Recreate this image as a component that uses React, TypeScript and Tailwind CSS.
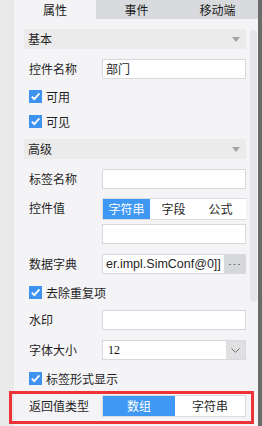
import React from 'react';

const font = { fontFamily: '"Noto Sans CJK SC", "Liberation Sans", sans-serif' };

const Check: React.FC<{ label: string; className?: string }> = ({ label, className }) => (
  <div className={`flex items-center h-[13px] pl-[5px] ${className ?? ''}`}>
    <span className="w-[13px] h-[13px] bg-[#3d93ef] flex items-center justify-center shrink-0">
      <svg width="11" height="11" viewBox="0 0 11 11">
        <path d="M1.8 5.6 L4.3 8.2 L9.4 2.4" stroke="#fff" strokeWidth="1.8" fill="none" />
      </svg>
    </span>
    <span className="ml-[4px] text-[12px] leading-none text-[#1f1f1f]">{label}</span>
  </div>
);

const Header: React.FC<{ title: string; className?: string }> = ({ title, className }) => (
  <div className={`h-[20px] bg-[#ebebeb] flex items-center justify-between pl-[4px] pr-[6px] ${className ?? ''}`}>
    <span className="text-[12px] leading-none text-[#1f1f1f]">{title}</span>
    <svg width="8" height="5" viewBox="0 0 8 5">
      <path d="M0 0 H8 L4 5 Z" fill="#a3a3a3" />
    </svg>
  </div>
);

const Row: React.FC<{ label: string; className?: string; children: React.ReactNode }> = ({
  label,
  className,
  children,
}) => (
  <div className={`flex items-center ${className ?? ''}`}>
    <span className="w-[78px] pl-[5px] text-[12px] leading-none text-[#1f1f1f] shrink-0">{label}</span>
    <div className="flex-1">{children}</div>
  </div>
);

const Input: React.FC<{ value?: string }> = ({ value }) => (
  <div className="h-[20px] bg-white border border-[#d9d9db] flex items-center px-[3px] text-[12px] leading-none text-[#1f1f1f] overflow-hidden whitespace-nowrap">
    {value}
  </div>
);

export default function App() {
  return (
    <div className="relative w-[262px] h-[426px] flex bg-[#e9e9e9] overflow-hidden" style={font}>
      <div className="w-[14px] shrink-0 bg-[#e9e9e9]" />
      <div className="w-[244px] shrink-0 flex flex-col bg-[#f4f4f6]">
        <div className="h-[19px] flex text-[12px] leading-none text-[#1a1a1a]">
          <div className="w-[82px] flex items-center justify-center bg-[#f4f4f6]">属性</div>
          <div className="w-[81px] flex items-center justify-center bg-[#d9dadd]">事件</div>
          <div className="w-[81px] flex items-center justify-center bg-[#d9dadd]">移动端</div>
        </div>
        <div className="flex flex-1">
          <div className="w-[232px] pl-[10px] flex flex-col">
            <Header title="基本" className="mt-[10px]" />
            <Row label="控件名称" className="mt-[10px]">
              <Input value="部门" />
            </Row>
            <Check label="可用" className="mt-[11px]" />
            <Check label="可见" className="mt-[12px]" />
            <Header title="高级" className="mt-[11px]" />
            <Row label="标签名称" className="mt-[10px]">
              <Input />
            </Row>
            <div className="flex items-start mt-[9px]">
              <span className="w-[78px] pl-[5px] pt-[4px] text-[12px] leading-none text-[#1f1f1f] shrink-0">控件值</span>
              <div className="flex-1 flex flex-col">
                <div className="h-[22px] flex border-y border-l border-[#dcdcde] bg-white text-[12px] leading-none text-[#1f1f1f]">
                  <div className="w-[47px] flex items-center justify-center bg-[#3f98f3] text-white">字符串</div>
                  <div className="w-[47px] flex items-center justify-center">字段</div>
                  <div className="w-[47px] flex items-center justify-center">公式</div>
                </div>
                <div className="mt-[4px]">
                  <Input />
                </div>
              </div>
            </div>
            <Row label="数据字典" className="mt-[10px]">
              <div className="h-[20px] flex bg-white border border-[#d9d9db]">
                <div
                  className="flex-1 flex items-center pl-[3px] text-[12.5px] leading-none text-[#1f1f1f] overflow-hidden whitespace-nowrap"
                  style={{ fontFamily: '"Liberation Sans", sans-serif' }}
                >
                  er.impl.SimConf@0]]
                </div>
                <div className="w-[21px] bg-[#d6d7da] flex items-center justify-center">
                  <svg width="11" height="3" viewBox="0 0 11 3">
                    <rect x="0" y="1" width="2" height="1" fill="#7a7a7a" />
                    <rect x="4.5" y="1" width="2" height="1" fill="#7a7a7a" />
                    <rect x="9" y="1" width="2" height="1" fill="#7a7a7a" />
                  </svg>
                </div>
              </div>
            </Row>
            <Check label="去除重复项" className="mt-[12px]" />
            <Row label="水印" className="mt-[11px]">
              <Input />
            </Row>
            <Row label="字体大小" className="mt-[10px]">
              <div className="h-[20px] flex bg-white border border-[#d9d9db]">
                <div
                  className="flex-1 flex items-center pl-[5px] text-[12px] leading-none text-[#111]"
                  style={{ fontFamily: '"Liberation Serif", serif' }}
                >
                  12
                </div>
                <div className="w-[19px] bg-[#e0e0e2] flex items-center justify-center">
                  <svg width="9" height="5" viewBox="0 0 9 5">
                    <path d="M0.5 0.5 L4.5 4.3 L8.5 0.5" stroke="#6e6e6e" strokeWidth="1" fill="none" />
                  </svg>
                </div>
              </div>
            </Row>
            <Check label="标签形式显示" className="mt-[12px]" />
            <Row label="返回值类型" className="mt-[10px]">
              <div className="h-[22px] flex border border-[#dcdcde] bg-white text-[12px] leading-none text-[#1f1f1f]">
                <div className="w-[72px] flex items-center justify-center bg-[#3f98f3] text-white">数组</div>
                <div className="flex-1 flex items-center justify-center">字符串</div>
              </div>
            </Row>
          </div>
          <div className="w-[7px] h-[272px] mt-[11px] ml-[4px] rounded-[3px] bg-[#e6e6e8]" />
        </div>
      </div>
      <div className="w-[4px] shrink-0 bg-[#6a6a6a]" />
      <div className="absolute left-[9px] top-[391px] w-[245px] h-[33px] border-[3px] border-[#ee3338]" />
    </div>
  );
}
